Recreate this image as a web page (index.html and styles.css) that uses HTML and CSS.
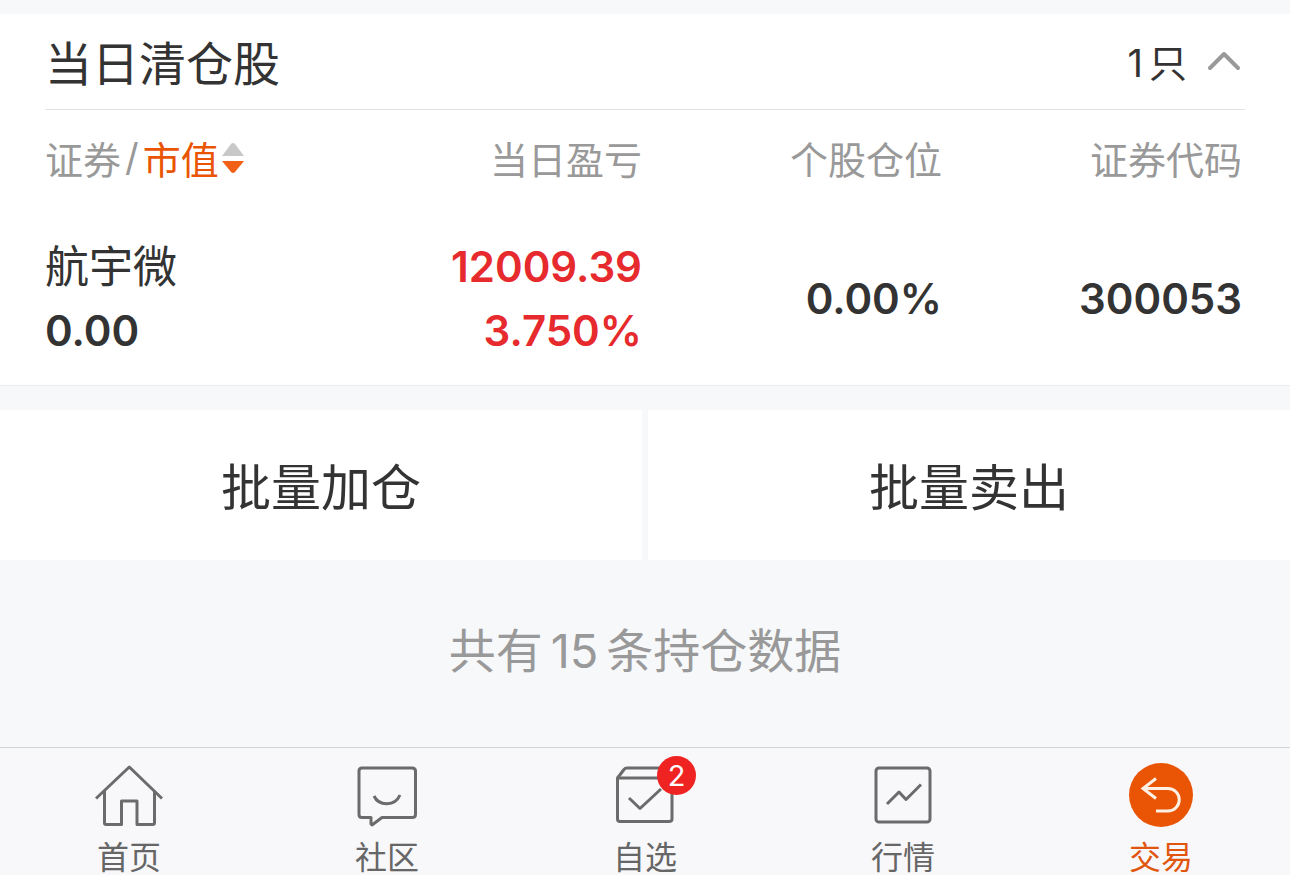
FILE: index.html
```html
<!DOCTYPE html>
<html lang="zh-CN">
<head>
  <meta charset="UTF-8">
  <meta name="viewport" content="width=device-width, initial-scale=1">
  <title>交易</title>
  <link rel="stylesheet" href="styles.css">
</head>
<body>

  <main>
    <section class="cleared">
      <div class="cleared-head">
        <h1>当日清仓股</h1>
        <button class="toggle" type="button" aria-expanded="true">
          <span class="count"><span>1</span><span>只</span></span>
          <svg width="34" height="20" viewBox="0 0 34 20" aria-hidden="true">
            <path d="M3 17 L17 3 L31 17"/>
          </svg>
        </button>
      </div>

      <table class="stocks">
        <thead>
          <tr>
            <th>
              <div class="sort">
                <span>证券</span><span class="slash">/</span><button type="button">市值
                  <svg width="22" height="36" viewBox="0 -4 22 36" aria-hidden="true">
                    <path class="up" d="M0 13 L9 1 Q11 -1 13 1 L22 13 Z"/>
                    <path class="down" d="M0 18 L22 18 L13 29 Q11 31 9 29 Z"/>
                  </svg>
                </button>
              </div>
            </th>
            <th>当日盈亏</th>
            <th>个股仓位</th>
            <th>证券代码</th>
          </tr>
        </thead>
        <tbody>
          <tr>
            <td><div class="name">航宇微</div><div>0.00</div></td>
            <td class="rise"><div>12009.39</div><div>3.750%</div></td>
            <td>0.00%</td>
            <td>300053</td>
          </tr>
        </tbody>
      </table>
    </section>

    <div class="batch">
      <button type="button">批量加仓</button>
      <button type="button">批量卖出</button>
    </div>

    <p class="total">共有<span>15</span>条持仓数据</p>
  </main>

  <nav class="tabbar">
    <a href="#">
      <span class="icon">
        <svg viewBox="0 0 68 68" aria-hidden="true">
          <path d="M1 36.5 L34.3 5 L67 36.5"/>
          <path d="M9.5 29 V61 Q9.5 62.5 11 62.5 H26.5 V39 H42 V62.5 H57.5 Q59.5 62.5 59.5 61 V29"/>
        </svg>
      </span>
      首页
    </a>
    <a href="#">
      <span class="icon">
        <svg viewBox="0 0 68 68" aria-hidden="true">
          <path d="M9 6 H59 Q62.5 6 62.5 9 V52.5 Q62.5 55.5 59 55.5 H29 L19 63 L18 62 V55.5 H9 Q6 55.5 6 52.5 V9 Q6 6 9 6 Z"/>
          <path d="M21 34 C26 44.5 42 44.5 47 33"/>
        </svg>
      </span>
      社区
    </a>
    <a href="#">
      <span class="icon">
        <svg viewBox="0 0 68 68" aria-hidden="true">
          <path d="M6.5 16 V57 Q6.5 59.5 9 59.5 H58 Q61 59.5 61 57 V16 Z"/>
          <path d="M6.5 16 L13 7.5 Q14 6 16 6 H53 L61 16"/>
          <path d="M18 36 L29 46.5 L50 27"/>
        </svg>
        <span class="badge">2</span>
      </span>
      自选
    </a>
    <a href="#">
      <span class="icon">
        <svg viewBox="0 0 68 68" aria-hidden="true">
          <rect x="7" y="6" width="54" height="54" rx="3"/>
          <path d="M18 42 L30 30 L37 37.5 L52 22.5"/>
        </svg>
      </span>
      行情
    </a>
    <a class="active" href="#" aria-current="page">
      <span class="icon">
        <svg viewBox="0 0 68 68" aria-hidden="true">
          <circle cx="34" cy="33" r="32"/>
          <path d="M29 16.5 L16 26.5 L29 36.5 M16 26.5 H41 A11.2 11.2 0 0 1 41 49 H29"/>
        </svg>
      </span>
      交易
    </a>
  </nav>

</body>
</html>
```
FILE: styles.css
```css
* {
  box-sizing: border-box;
}

body {
  margin: 0;
  font-family: Inter, "Noto Sans CJK SC", sans-serif;
  font-weight: 400;
  color: #333;
  background: #f7f8fa;
}

button {
  padding: 0;
  border: none;
  background: none;
  font: inherit;
  color: inherit;
  cursor: pointer;
}

main {
  padding-top: 14px;
}

.cleared {
  padding: 0 45px;
  background: #fff;
  border-bottom: 1px solid #ebecee;
}

.cleared-head {
  display: flex;
  justify-content: space-between;
  align-items: center;
  height: 96px;
  padding-bottom: 2px;
  border-bottom: 1px solid #e2e2e2;
}

h1 {
  margin: 0;
  font-size: 47px;
  font-weight: 400;
}

.toggle {
  display: flex;
  align-items: center;
  gap: 20px;
  padding-right: 4px;
  font-size: 38px;
}

.count {
  display: flex;
  align-items: baseline;
  gap: 6px;
}

.toggle svg {
  fill: none;
  stroke: #999;
  stroke-width: 4;
  stroke-linecap: round;
  stroke-linejoin: round;
}

.stocks {
  width: 100%;
  table-layout: fixed;
  border-collapse: collapse;
}

.stocks th,
.stocks td {
  padding: 0 3px 0 0;
  text-align: right;
}

.stocks th {
  height: 100px;
  padding-bottom: 6px;
  font-size: 38px;
  font-weight: 400;
  color: #999;
}

.stocks td {
  height: 175px;
  padding-top: 2px;
  font-size: 42px;
  font-weight: 600;
  line-height: 64px;
}

.stocks td:first-child {
  text-align: left;
}

.stocks .name {
  font-size: 44px;
  font-weight: 400;
}

.stocks .rise {
  color: #e62a2d;
}

.sort,
.sort button {
  display: flex;
  align-items: center;
}

.sort button {
  gap: 3px;
  color: #e95504;
}

.slash {
  padding: 0 4px;
}

.sort .up {
  fill: #c8c8c8;
}

.sort .down {
  fill: #f26018;
}

.batch {
  display: grid;
  grid-template-columns: 1fr 1fr;
  gap: 6px;
  margin-top: 24px;
}

.batch button {
  height: 150px;
  padding-bottom: 2px;
  background: #fff;
  font-size: 50px;
}

.total {
  margin: 0;
  padding: 59px 0 64px;
  font-size: 47px;
  line-height: 64px;
  text-align: center;
  color: #999;
}

.total span {
  padding: 0 8px;
}

.tabbar {
  display: grid;
  grid-template-columns: repeat(5, 1fr);
  padding-top: 14px;
  border-top: 1px solid #d3d4d6;
  background: #f8f8fa;
}

.tabbar a {
  display: flex;
  flex-direction: column;
  align-items: center;
  gap: 12px;
  font-size: 32px;
  line-height: 32px;
  color: #666;
  text-decoration: none;
}

.tabbar a.active {
  color: #e0560f;
}

.icon {
  position: relative;
  width: 68px;
  height: 68px;
}

.icon svg {
  display: block;
  fill: none;
  stroke: #6b6b6b;
  stroke-width: 3;
  stroke-linejoin: round;
}

.active .icon circle {
  fill: #e95504;
  stroke: none;
}

.active .icon path {
  stroke: #fff0e4;
  stroke-linejoin: miter;
}

.badge {
  position: absolute;
  top: -6px;
  left: 46px;
  width: 39px;
  height: 39px;
  border-radius: 50%;
  background: #f02323;
  font-size: 29px;
  line-height: 39px;
  text-align: center;
  color: #fff;
}
```
